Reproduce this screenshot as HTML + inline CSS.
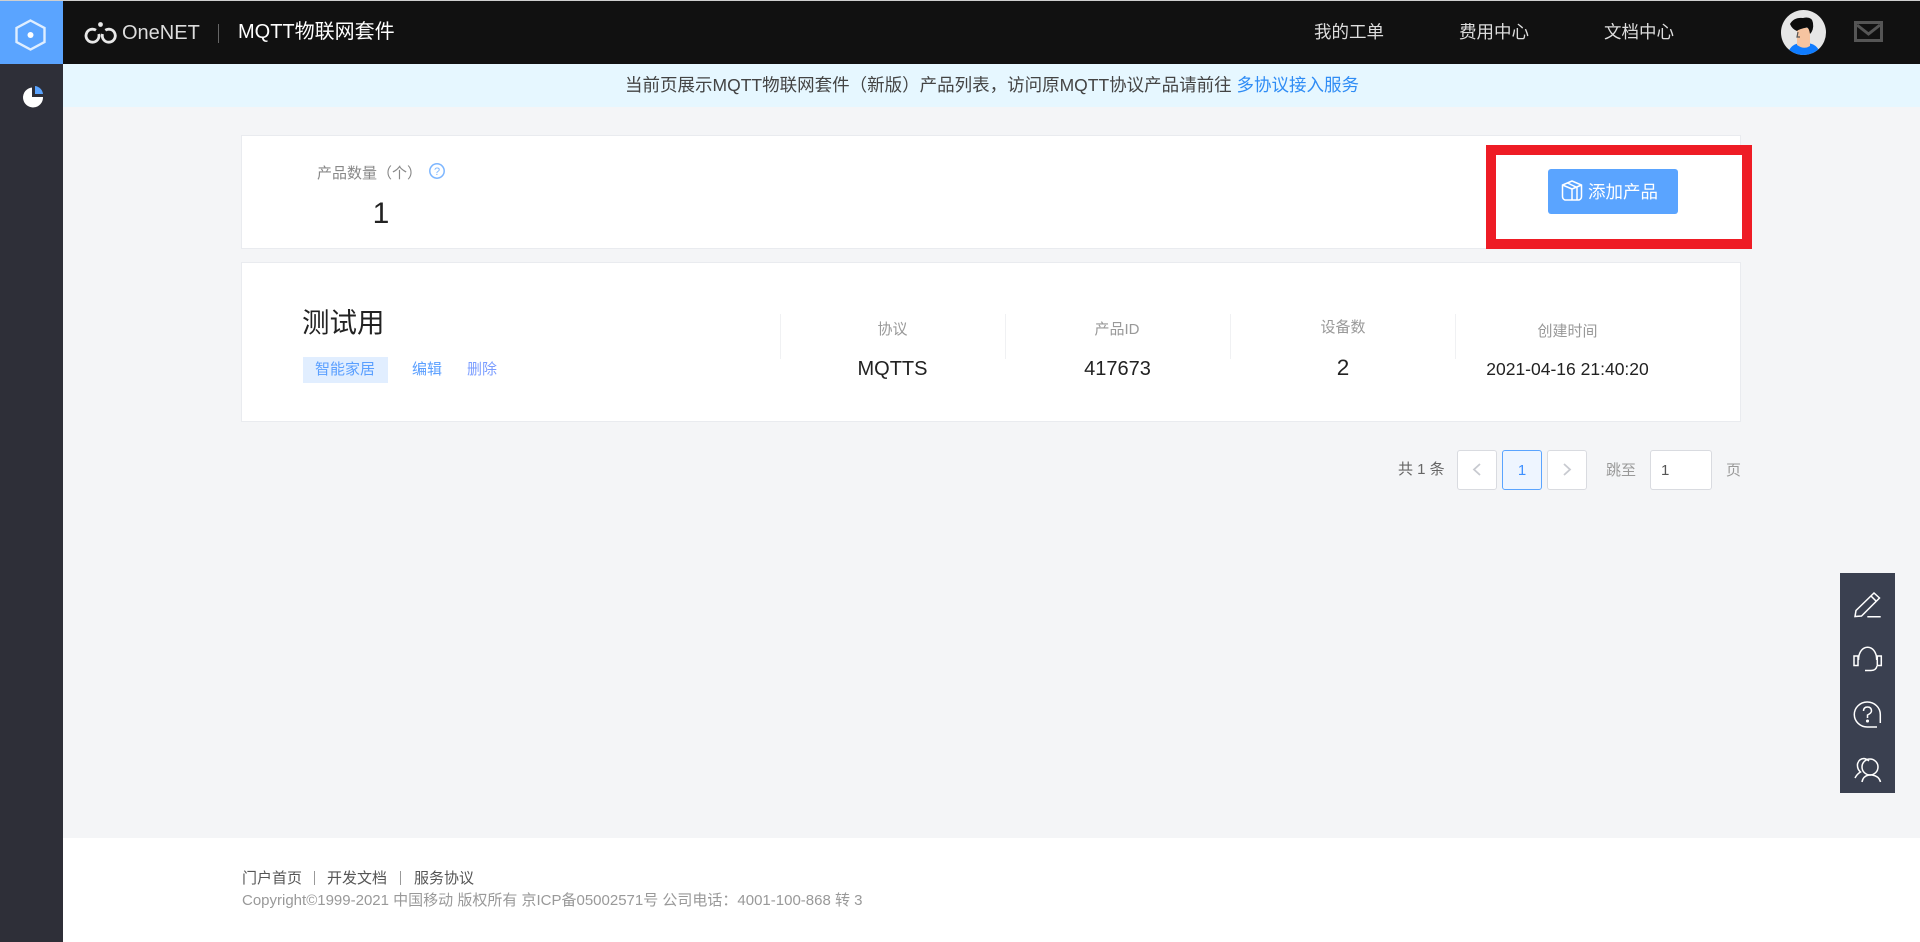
<!DOCTYPE html>
<html lang="zh"><head><meta charset="utf-8"><title>MQTT物联网套件</title>
<style>
html,body{margin:0;padding:0;width:1920px;height:942px;overflow:hidden;background:#f4f5f7}
body{position:relative;font-family:"Liberation Sans","Noto Sans CJK SC",sans-serif;color:#333}
.a{position:absolute}
.t{position:absolute;white-space:nowrap;line-height:30px;height:30px}
.c{transform:translateX(-50%)}
svg{position:absolute;overflow:visible}
.card{position:absolute;left:241px;width:1498px;background:#fff;border:1px solid #e9ebef}
.pg{position:absolute;top:450px;height:38px;width:38px;border:1px solid #d9dbe0;border-radius:3px;background:#fff;text-align:center;line-height:40px;font-size:15px}
.dv{position:absolute;top:314px;width:1px;height:45px;background:#f0f1f3}
.lb{font-size:15px;color:#999}
.val{font-size:20px;color:#222}
</style></head><body>
<div class="a" style="left:0;top:0;width:1920px;height:1px;background:#cfcfcf"></div>
<div class="a" style="left:0;top:1px;width:1920px;height:63px;background:#111"></div>
<div class="a" style="left:0;top:1px;width:63px;height:63px;background:#5aa4ff"></div>
<div class="a" style="left:0;top:64px;width:63px;height:878px;background:#2e2f38"></div>
<div class="a" style="left:63px;top:64px;width:1857px;height:43px;background:#e6f7ff"></div>
<div class="a" style="left:63px;top:838px;width:1857px;height:104px;background:#fff"></div>

<svg style="left:0;top:0" width="63" height="64"><path d="M30.5 20.5L44.500 28V42L30.5 49.500L16.500 42V28Z" fill="none" stroke="#dfeeff" stroke-width="2.4"/><circle cx="30.5" cy="35" r="3" fill="#fff"/></svg>
<svg style="left:0;top:64px" width="63" height="60"><path d="M32 23.5A10 10 0 1 0 43 33H32Z" fill="#fff"/><path d="M35 22A9 9 0 0 1 43 30H35Z" fill="#5aa4ff"/></svg>

<svg style="left:0;top:0" width="120" height="64" fill="none" stroke="#e8e8e8" stroke-width="2.800"><path d="M96 30.200A6.500 6.500 0 1 0 98.800 34"/><path d="M102.500 34A6.500 6.500 0 1 0 105.300 30.200"/><circle cx="100.500" cy="24.500" r="2.400" fill="#e8e8e8" stroke="none"/></svg>
<div class="t" style="left:122px;top:18px;font-size:20px;color:#ddd">OneNET</div>
<div class="a" style="left:218px;top:24px;width:1px;height:19px;background:#666"></div>
<div class="t" style="left:238px;top:17px;font-size:20px;color:#fff">MQTT物联网套件</div>
<div class="t" style="left:1314px;top:17px;font-size:17.5px;color:#ddd">我的工单</div>
<div class="t" style="left:1459px;top:17px;font-size:17.5px;color:#ddd">费用中心</div>
<div class="t" style="left:1604px;top:17px;font-size:17.5px;color:#ddd">文档中心</div>
<svg style="left:1781px;top:10px" width="45" height="45"><defs><clipPath id="av"><circle cx="22.5" cy="22.5" r="22.5"/></clipPath></defs><g clip-path="url(#av)"><rect width="45" height="45" fill="#e6e6e6"/><path d="M6 45Q9 35 17 33.500H29Q37 35 40 45Z" fill="#0f7cff"/><path d="M16 18H29V36Q23 40 16 35Z" fill="#f6c4a0"/><path d="M9 14Q13 7 22 8Q31 6 32 13Q33 20 29 24Q28 18 26 17.500Q18 19 16 21Q11 19 9 14Z" fill="#0c0c0c"/><path d="M17 22L16 27L19 27" fill="none" stroke="#555" stroke-width="1.200"/></g></svg>
<svg style="left:1854px;top:21px" width="29" height="21" fill="none" stroke="#555" stroke-width="3"><rect x="1.500" y="1.500" width="26" height="18"/><path d="M3 4L14.500 13L26 4"/></svg>

<div class="t" style="left:625px;top:70px;font-size:17.5px;color:#444">当前页展示MQTT物联网套件（新版）产品列表，访问原MQTT协议产品请前往 <span style="color:#2f8cf5">多协议接入服务</span></div>

<div class="card" style="top:135px;height:112px"></div>
<div class="t" style="left:317px;top:159px;font-size:15px;color:#888">产品数量（个）</div>
<svg style="left:429px;top:163px" width="16" height="16"><circle cx="8" cy="8" r="7.200" fill="none" stroke="#7db6ff" stroke-width="1.500"/><text x="8" y="12" text-anchor="middle" font-size="11" fill="#7db6ff" font-family="Liberation Sans">?</text></svg>
<div class="t c" style="left:381px;top:199px;font-size:30px;color:#222">1</div>
<div class="a" style="left:1486px;top:145px;width:246px;height:84px;border:10px solid #ee1c25;background:#fff"></div>
<div class="a" style="left:1548px;top:169px;width:130px;height:45px;border-radius:3px;background:#5aa4ff"></div>
<svg style="left:1561px;top:180px" width="22" height="22" fill="none" stroke="#fff" stroke-width="1.5"><path d="M11 1L20.5 5V16.5Q20.5 19 18 20H4Q1.500 19 1.500 16.500V5Z"/><path d="M1.500 5L11 9L20.500 5M11 9V20M6.500 3L16 7.500V20"/></svg>
<div class="t" style="left:1588px;top:177px;font-size:17.5px;color:#fff">添加产品</div>

<div class="card" style="top:262px;height:158px"></div>
<div class="t" style="left:302px;top:308px;font-size:27.5px;color:#222">测试用</div>
<div class="a" style="left:303px;top:357px;width:85px;height:26px;background:#e1eeff"></div>
<div class="t" style="left:315px;top:355px;font-size:15px;color:#5a9fff">智能家居</div>
<div class="t" style="left:412px;top:355px;font-size:15px;color:#5a9fff">编辑</div>
<div class="t" style="left:467px;top:355px;font-size:15px;color:#7b9dff">删除</div>
<div class="dv" style="left:780px"></div><div class="dv" style="left:1005px"></div><div class="dv" style="left:1230px"></div><div class="dv" style="left:1455px"></div>
<div class="t c lb" style="left:892.500px;top:315px">协议</div>
<div class="t c lb" style="left:1117px;top:315px">产品ID</div>
<div class="t c lb" style="left:1343px;top:313px">设备数</div>
<div class="t c lb" style="left:1567.500px;top:317px">创建时间</div>
<div class="t c val" style="left:892.500px;top:354px">MQTTS</div>
<div class="t c val" style="left:1117.500px;top:354px">417673</div>
<div class="t c val" style="left:1343px;top:353px;font-size:22.500px">2</div>
<div class="t c" style="left:1567.500px;top:354px;font-size:17.500px;color:#222">2021-04-16 21:40:20</div>

<div class="t" style="left:1398px;top:454px;font-size:15px;color:#666;margin-top:1px">共 1 条</div>
<div class="pg" style="left:1457px"></div>
<svg style="left:1457px;top:449px" width="40" height="40"><path d="M23 15L17 20.500L23 26" fill="none" stroke="#c8cad0" stroke-width="1.8"/></svg>
<div class="pg" style="left:1502px;border-color:#5aa4ff;background:#eef5ff;color:#3d8fff">1</div>
<div class="pg" style="left:1547px"></div>
<svg style="left:1547px;top:449px" width="40" height="40"><path d="M17 15L23 20.500L17 26" fill="none" stroke="#c8cad0" stroke-width="1.800"/></svg>
<div class="t" style="left:1606px;top:456px;font-size:15px;color:#999">跳至</div>
<div class="pg" style="left:1650px;width:60px;text-align:left;text-indent:10px;color:#555">1</div>
<div class="t" style="left:1726px;top:456px;font-size:15px;color:#999">页</div>

<div class="a" style="left:1840px;top:573px;width:55px;height:220px;background:#3a4050"></div>
<svg style="left:1840px;top:573px" width="55" height="220" fill="none" stroke="#fff" stroke-width="1.500">
<path d="M15 43.500L16 37.500L34 20L39.500 25L21.500 43Z"/><path d="M31 23L36.500 28.500M27.300 43.700H40.700"/>
<path d="M18.500 87C18.500 70 36.700 70 36.700 87"/><rect x="14" y="83" width="4" height="9.500"/><rect x="37.300" y="83" width="4" height="9.500"/><path d="M37 93Q36 97.500 31 97.500H25"/>
<path d="M40.300 150V141.500A13 12.500 0 1 0 27.500 154H37"/><path d="M23.500 138Q23.500 134 27.500 134Q31.500 134 31.500 138Q31.500 140 27.500 142V145"/><circle cx="27.500" cy="148" r=".8"/>
<path d="M15 205Q17 201 20.500 199Q17 196 17.500 191Q19 185.500 24 185.500Q27 186 29 188"/><circle cx="30" cy="194" r="8"/><path d="M22 209Q23 203 29 202H32Q39 203 40.500 209"/>
</svg>

<div class="t" style="left:242px;top:864px;font-size:15px;color:#555">门户首页</div>
<div class="a" style="left:314px;top:871px;width:1px;height:14px;background:#999"></div>
<div class="t" style="left:327px;top:864px;font-size:15px;color:#555">开发文档</div>
<div class="a" style="left:400px;top:871px;width:1px;height:14px;background:#999"></div>
<div class="t" style="left:414px;top:864px;font-size:15px;color:#555">服务协议</div>
<div class="t" style="left:242px;top:886px;font-size:15px;color:#999">Copyright©1999-2021 中国移动 版权所有 京ICP备05002571号 公司电话：4001-100-868 转 3</div>
</body></html>
